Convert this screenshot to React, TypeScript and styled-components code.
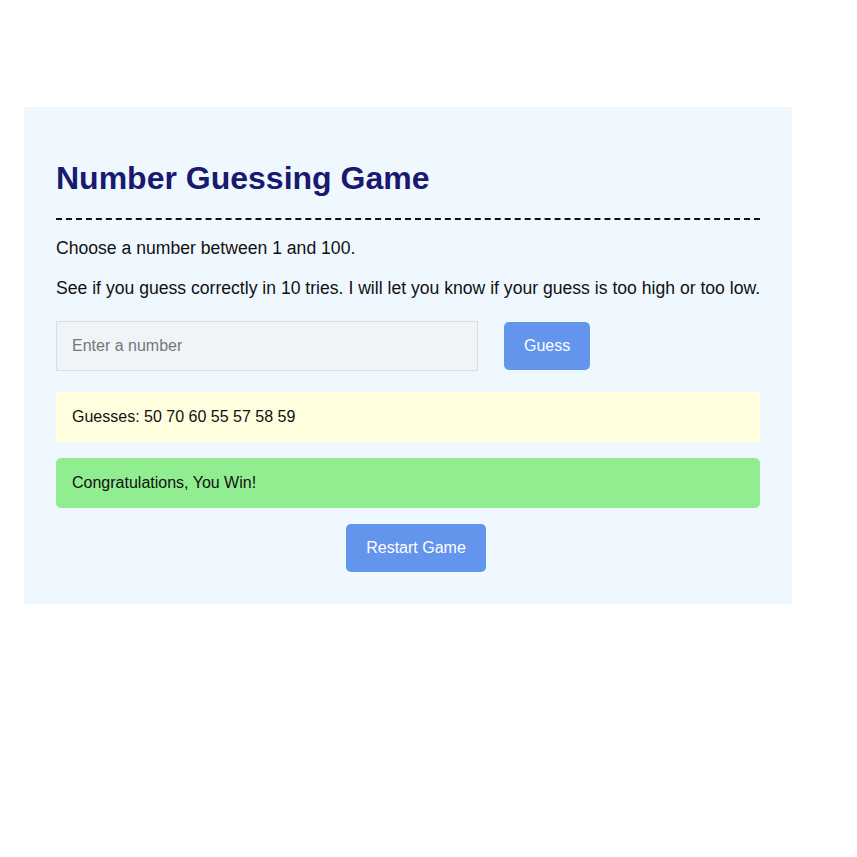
import React from "react";
import styled, { createGlobalStyle } from "styled-components";

const GlobalStyle = createGlobalStyle`
  html, body {
    margin: 0;
    padding: 0;
    background: #ffffff;
    font-family: "Liberation Sans", Arial, sans-serif;
  }
`;

const Card = styled.div`
  box-sizing: border-box;
  width: 768px;
  margin: 107px 0 0 24px;
  padding: 32px;
  background: #f0f8ff;
  color: #111;
  font-size: 16px;
  line-height: 24px;
`;

const Title = styled.h1`
  margin: 21px 0 16px;
  padding-bottom: 21px;
  border-bottom: 2px dashed #111;
  font-size: 32px;
  line-height: 37px;
  font-weight: bold;
  color: #191970;
`;

const Text = styled.p`
  margin: 0 0 16px;
  font-size: 17.6px;
  white-space: nowrap;
`;

const Form = styled.div`
  display: flex;
  align-items: center;
  gap: 26px;
  margin: 21px 0 21px;
`;

const NumberInput = styled.input`
  box-sizing: border-box;
  width: 422px;
  height: 50px;
  padding: 0 15px;
  border: 1px solid #dcdcdc;
  background: #eff4f8;
  font-family: "Liberation Sans", Arial, sans-serif;
  font-size: 16px;
  color: #111;
  outline: none;
  &::placeholder {
    color: #777;
  }
`;

const Button = styled.button<{ $shift?: number }>`
  box-sizing: border-box;
  height: 48px;
  padding: 0 20px;
  margin-left: ${(p) => p.$shift ?? 0}px;
  border: none;
  border-radius: 5px;
  background: #6495ed;
  color: #fff;
  font-family: "Liberation Sans", Arial, sans-serif;
  font-size: 16px;
  cursor: pointer;
`;

const Message = styled.div<{ $bg: string; $radius?: number }>`
  padding: 13px 16px;
  margin-bottom: 16px;
  background: ${(p) => p.$bg};
  border-radius: ${(p) => p.$radius ?? 0}px;
`;

const Center = styled.div`
  display: flex;
  justify-content: center;
`;

export default function App() {
  const guesses = [50, 70, 60, 55, 57, 58, 59];
  return (
    <>
      <GlobalStyle />
      <Card>
        <Title>Number Guessing Game</Title>
        <Text>Choose a number between 1 and 100.</Text>
        <Text>
          See if you guess correctly in 10 tries. I will let you know if your
          guess is too high or too low.
        </Text>
        <Form>
          <NumberInput type="number" placeholder="Enter a number" />
          <Button>Guess</Button>
        </Form>
        <Message $bg="#ffffe0">Guesses: {guesses.join(" ")}</Message>
        <Message $bg="#90ee90" $radius={5}>
          Congratulations, You Win!
        </Message>
        <Center>
          <Button $shift={16}>Restart Game</Button>
        </Center>
      </Card>
    </>
  );
}
